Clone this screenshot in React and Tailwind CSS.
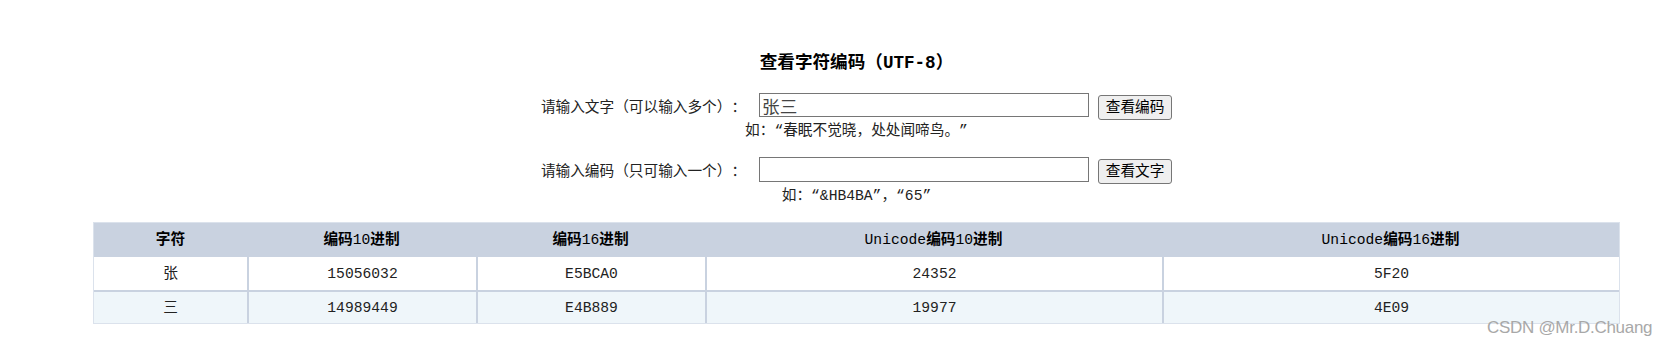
import React from 'react'

const rows = [
  { ch: '张', dec: '15056032', hex: 'E5BCA0', uDec: '24352', uHex: '5F20' },
  { ch: '三', dec: '14989449', hex: 'E4B889', uDec: '19977', uHex: '4E09' },
]

// latin bits of the header stay regular weight, like the original page
const headers = [
  [['字符', true]],
  [['编码', true], ['10', false], ['进制', true]],
  [['编码', true], ['16', false], ['进制', true]],
  [['Unicode', false], ['编码', true], ['10', false], ['进制', true]],
  [['Unicode', false], ['编码', true], ['16', false], ['进制', true]],
]

const cols = 'grid grid-cols-[153px_229px_229px_457px_1fr]'

const App = () => {
  return (
    <div
      className="relative min-h-[347px] bg-white text-[#222] overflow-hidden [text-spacing-trim:space-all]"
      style={{ fontFamily: '"Liberation Mono", "Noto Sans CJK SC", monospace' }}
    >
      <div className="ml-[93px] w-[1527px] pt-[51px] flex flex-col">
        <h4 className="text-center text-[17.6px] leading-[24px] font-bold text-black">查看字符编码（UTF-8）</h4>

        <div className="mt-[18px] flex justify-center items-start">
          <span className="mt-[3px] text-[14.67px] leading-[24px]">请输入文字（可以输入多个）：</span>
          <input
            defaultValue="张三"
            className="ml-[13px] h-[24px] w-[330px] border border-[#767676] px-[2px] text-[17.6px] leading-[22px] text-[#444] outline-none"
          />
          <button
            type="button"
            className="ml-[9px] mt-[2px] h-[25px] w-[74px] rounded-[3px] border border-[#767676] bg-[#efefef] text-[14.67px] leading-[22px] text-black"
          >
            查看编码
          </button>
        </div>
        <div className="mt-[1px] text-center text-[14.67px] leading-[20px]">如：“春眠不觉晓，处处闻啼鸟。”</div>

        <div className="mt-[16px] flex justify-center items-start">
          <span className="mt-[3px] text-[14.67px] leading-[24px]">请输入编码（只可输入一个）：</span>
          <input className="ml-[13px] h-[25px] w-[330px] border border-[#767676] px-[2px] text-[17.6px] text-[#444] outline-none" />
          <button
            type="button"
            className="ml-[9px] mt-[2px] h-[25px] w-[74px] rounded-[3px] border border-[#767676] bg-[#efefef] text-[14.67px] leading-[22px] text-black"
          >
            查看文字
          </button>
        </div>
        <div className="mt-[2px] text-center text-[14.67px] leading-[20px]">如：“&amp;HB4BA”，“65”</div>

        <div className="mt-[16px] border border-[#dbe2ec] text-[14.67px]">
          <div className={`${cols} h-[34px] bg-[#c9d2e0] text-black`}>
            {headers.map((parts, idx) => (
              // eslint-disable-next-line react/no-array-index-key
              <div key={idx} className="flex items-center justify-center">
                {parts.map(([t, bold], j) => (
                  // eslint-disable-next-line react/no-array-index-key
                  <span key={j} className={bold ? 'font-bold' : 'font-normal'}>
                    {t}
                  </span>
                ))}
              </div>
            ))}
          </div>
          {rows.map((r, i) => (
            <div
              key={r.ch}
              className={`${cols} ${i === 0 ? 'h-[33px] bg-white' : 'h-[33px] bg-[#eff6fa] border-t-2 border-[#c9d2e0]'} text-[#222]`}
            >
              <div className="flex items-center justify-center">{r.ch}</div>
              <div className="flex items-center justify-center border-l-2 border-[#c9d2e0]">{r.dec}</div>
              <div className="flex items-center justify-center border-l-2 border-[#c9d2e0]">{r.hex}</div>
              <div className="flex items-center justify-center border-l-2 border-[#c9d2e0]">{r.uDec}</div>
              <div className="flex items-center justify-center border-l-2 border-[#c9d2e0]">{r.uHex}</div>
            </div>
          ))}
        </div>
      </div>

      <div
        className="absolute left-[1487px] top-[318px] text-[17px] leading-[20px] text-[#a8a8a8] tracking-[-0.3px]"
        style={{ fontFamily: '"Liberation Sans", Arial, sans-serif' }}
      >
        CSDN @Mr.D.Chuang
      </div>
    </div>
  )
}

export default App
